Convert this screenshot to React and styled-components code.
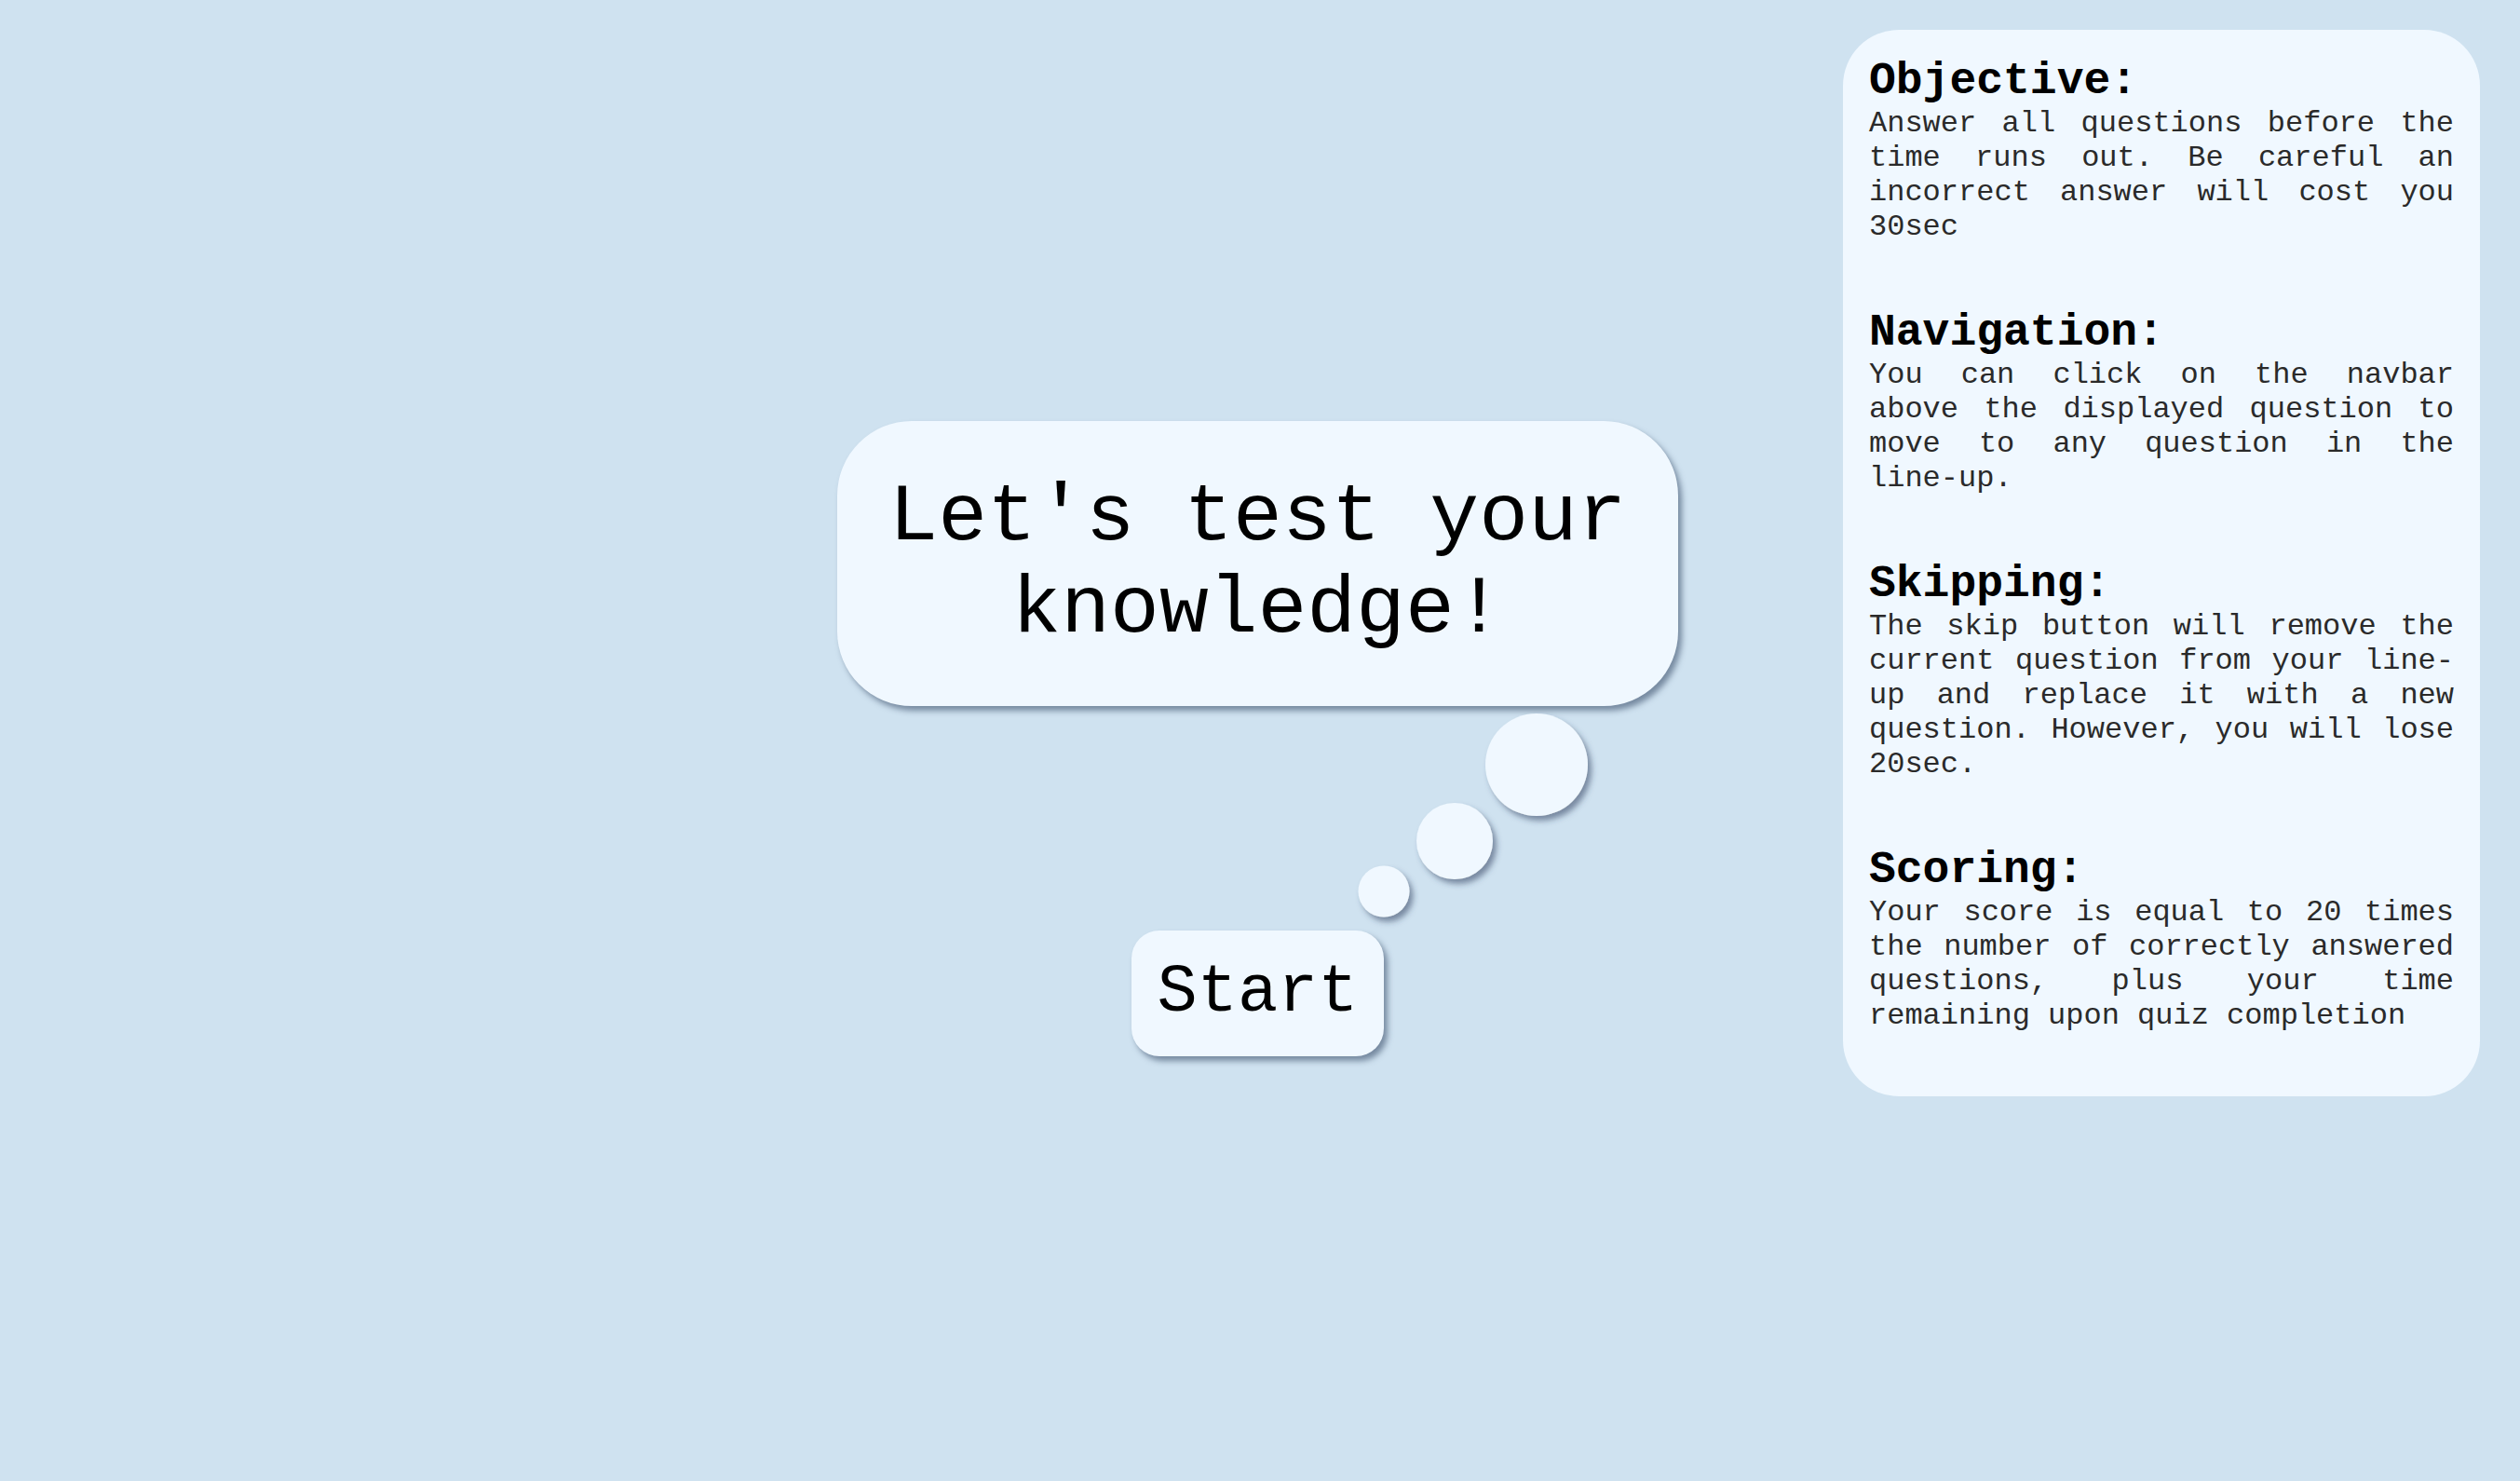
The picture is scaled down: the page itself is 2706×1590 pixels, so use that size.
import styled, { createGlobalStyle } from "styled-components"

const mono = `"Courier New", Courier, "Liberation Mono", monospace`

const GlobalStyle = createGlobalStyle`
  html, body {
    margin: 0;
    padding: 0;
  }
  body {
    background-color: #cfe2f0;
    font-family: ${mono};
    color: #000;
  }
`

const Page = styled.div`
  display: grid;
  grid-template-columns: 1fr auto 1fr;
  height: 100vh;
  overflow: hidden;
`

const Center = styled.main`
  grid-column: 2;
  align-self: center;
  margin: 0 5px 5px 0;
  display: flex;
  flex-direction: column;
  align-items: center;
`

const Bubble = styled.h1`
  box-sizing: border-box;
  width: 903px;
  margin: 0;
  padding: 54px 20px;
  background-color: #f0f8ff;
  border-radius: 80px;
  box-shadow: 4px 5px 6px rgba(45, 65, 95, 0.55);
  font-family: ${mono};
  font-size: 88px;
  font-weight: 400;
  line-height: normal;
  text-align: center;
`

const Trail = styled.svg`
  display: block;
  width: 903px;
  height: 241px;
  overflow: visible;
`

const StartButton = styled.button`
  box-sizing: border-box;
  width: 271px;
  height: 135px;
  padding: 0;
  border: none;
  border-radius: 30px;
  background-color: #f0f8ff;
  box-shadow: 4px 5px 6px rgba(45, 65, 95, 0.55);
  font-family: ${mono};
  font-size: 72px;
  line-height: normal;
  color: #000;
  cursor: pointer;
`

const Rules = styled.aside`
  grid-column: 3;
  justify-self: end;
  align-self: start;
  box-sizing: border-box;
  width: 684px;
  margin: 32px 43px 0 0;
  padding: 28px 28px 68px;
  background-color: #f0f8ff;
  border-radius: 60px;
  display: flex;
  flex-direction: column;
  gap: 68px;
`

const Section = styled.section`
  display: flex;
  flex-direction: column;
`

const Heading = styled.h2`
  margin: 0;
  font-size: 48px;
  font-weight: 700;
  line-height: normal;
`

const Text = styled.p`
  margin: 0;
  font-size: 32px;
  line-height: normal;
  text-align: justify;
  color: #2a2a2a;
`

const rules = [
  {
    title: "Objective:",
    text: "Answer all questions before the time runs out. Be careful an incorrect answer will cost you 30sec",
  },
  {
    title: "Navigation:",
    text: "You can click on the navbar above the displayed question to move to any question in the line-up.",
  },
  {
    title: "Skipping:",
    text: "The skip button will remove the current question from your line-up and replace it with a new question. However, you will lose 20sec.",
  },
  {
    title: "Scoring:",
    text: "Your score is equal to 20 times the number of correctly answered questions, plus your time remaining upon quiz completion",
  },
]

const dots = [
  { cx: 751, cy: 63, r: 55 },
  { cx: 663, cy: 145, r: 41 },
  { cx: 587, cy: 199, r: 27.5 },
]

const App = () => {
  return (
    <>
      <GlobalStyle />
      <Page>
        <Center>
          <Bubble>Let's test your knowledge!</Bubble>
          <Trail viewBox="0 0 903 241" aria-hidden="true">
            <defs>
              <filter id="dotShadow" x="-30%" y="-30%" width="160%" height="160%">
                <feDropShadow dx="4" dy="5" stdDeviation="3" floodColor="#2d415f" floodOpacity="0.55" />
              </filter>
            </defs>
            {dots.map((d, i) => (
              <circle key={i} cx={d.cx} cy={d.cy} r={d.r} fill="#f0f8ff" filter="url(#dotShadow)" />
            ))}
          </Trail>
          <StartButton>Start</StartButton>
        </Center>
        <Rules>
          {rules.map((rule) => (
            <Section key={rule.title}>
              <Heading>{rule.title}</Heading>
              <Text>{rule.text}</Text>
            </Section>
          ))}
        </Rules>
      </Page>
    </>
  )
}

export default App
